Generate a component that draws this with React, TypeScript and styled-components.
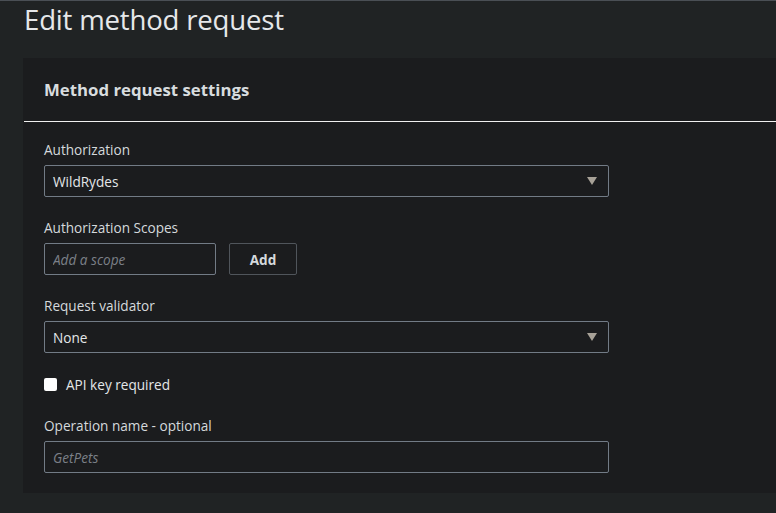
import React from "react";
import styled, { createGlobalStyle } from "styled-components";

const Global = createGlobalStyle`
  html, body { margin: 0; padding: 0; background: #202324; }
  body { font-family: "Open Sans", "Noto Sans", Arial, sans-serif; }
  * { box-sizing: border-box; }
`;

const Page = styled.div`
  width: 776px;
  height: 513px;
  overflow: hidden;
  background: #202324;
  border-top: 1px solid #4a4f55;
  padding-left: 23px;
`;

const Title = styled.h1`
  margin: 0;
  padding: 0 0 0 1px;
  height: 57px;
  font-size: 27.6px;
  line-height: 36px;
  font-weight: 400;
  color: #e6e8ea;
  letter-spacing: -0.2px;
`;

const Card = styled.section`
  width: 780px;
  background: #1b1c1e;
  height: 435px;
`;

const CardHeader = styled.header`
  height: 64px;
  display: flex;
  align-items: center;
  padding-left: 21px;
  border-bottom: 1px solid #f0f0f0;
  margin-left: 1px;
`;

const HeaderTitle = styled.h2`
  margin: 0;
  font-size: 16.8px;
  font-weight: 700;
  color: #d8dcdf;
  margin-left: -1px;
`;

const Body = styled.div`
  padding: 18px 0 0 21px;
  display: flex;
  flex-direction: column;
`;

const Field = styled.div<{ $mb?: number }>`
  display: flex;
  flex-direction: column;
  margin-bottom: ${(p) => p.$mb ?? 21}px;
`;

const Label = styled.label`
  font-size: 13.6px;
  line-height: 20px;
  color: #d5d9dc;
  margin-bottom: 5px;
`;

const SelectBox = styled.div`
  width: 565px;
  height: 32px;
  border: 1px solid #727b86;
  border-radius: 2px;
  display: flex;
  align-items: center;
  justify-content: space-between;
  padding: 0 11px 0 8px;
  font-size: 13.6px;
  color: #e4e7e9;
`;

const Arrow = styled.span`
  width: 0;
  height: 0;
  border-left: 5px solid transparent;
  border-right: 5px solid transparent;
  border-top: 8px solid #a7a197;
`;

const Row = styled.div`
  display: flex;
  gap: 13px;
`;

const TextInput = styled.input<{ $w: number }>`
  width: ${(p) => p.$w}px;
  height: 32px;
  border: 1px solid #727b86;
  border-radius: 2px;
  background: transparent;
  padding: 0 8px;
  font-family: inherit;
  font-size: 13.6px;
  color: #e4e7e9;
  outline: none;
  &::placeholder {
    color: #7b8088;
    font-style: italic;
  }
`;

const Button = styled.button`
  width: 68px;
  height: 32px;
  border: 1px solid #50555b;
  border-radius: 2px;
  background: transparent;
  font-family: inherit;
  font-size: 13.6px;
  font-weight: 700;
  color: #d5d9dc;
`;

const CheckRow = styled.label`
  display: flex;
  align-items: center;
  gap: 9px;
  font-size: 13.6px;
  line-height: 19px;
  color: #e4e7e9;
  margin-top: 5px;
  margin-bottom: 22px;
`;

const Box = styled.span`
  width: 13px;
  height: 13px;
  background: #ffffff;
  border-radius: 2px;
`;

export default function App() {
  return (
    <>
      <Global />
      <Page>
        <Title>Edit method request</Title>
        <Card>
          <CardHeader>
            <HeaderTitle>Method request settings</HeaderTitle>
          </CardHeader>
          <Body>
            <Field>
              <Label>Authorization</Label>
              <SelectBox>
                <span>WildRydes</span>
                <Arrow />
              </SelectBox>
            </Field>
            <Field>
              <Label>Authorization Scopes</Label>
              <Row>
                <TextInput $w={172} placeholder="Add a scope" />
                <Button>Add</Button>
              </Row>
            </Field>
            <Field $mb={17}>
              <Label>Request validator</Label>
              <SelectBox>
                <span>None</span>
                <Arrow />
              </SelectBox>
            </Field>
            <CheckRow>
              <Box />
              API key required
            </CheckRow>
            <Field>
              <Label>Operation name - optional</Label>
              <TextInput $w={565} placeholder="GetPets" />
            </Field>
          </Body>
        </Card>
      </Page>
    </>
  );
}
